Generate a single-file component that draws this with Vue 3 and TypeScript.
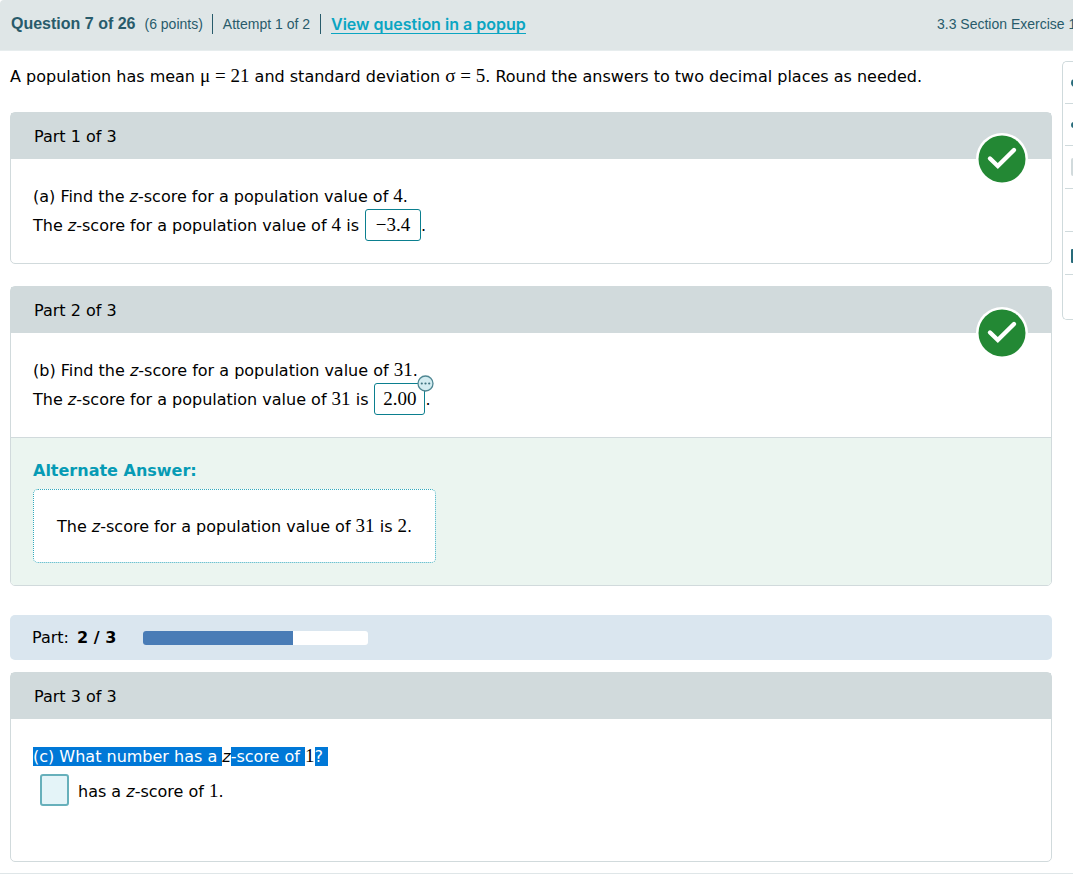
<script setup lang="ts">
import { ref } from 'vue'

const firstAnswer = ref('−3.4')
const secondAnswer = ref('2.00')
const thirdAnswer = ref('')
const progress = 66.6
const tools = ['round', 'dot', 'sheet', 'blank', 'book', 'blank']
</script>

<template>
  <div class="page">
    <header class="topbar">
      <h1 class="title">Question 7 of 26</h1>
      <span class="points">(6 points)</span>
      <span class="attempt">Attempt 1 of 2</span>
      <a class="popup" href="#popup">View question in a popup</a>
      <span class="section">3.3 Section Exercise 17</span>
    </header>

    <div class="content">
      <main class="main">
        <p class="prompt">
          A population has mean <span class="math">μ = 21</span> and standard deviation
          <span class="math">σ = 5</span>. Round the answers to two decimal places as needed.
        </p>

        <section class="card">
          <h2 class="card-head">Part 1 of 3</h2>
          <svg class="check" viewBox="0 0 52 52" role="img" aria-label="Correct">
            <circle cx="26" cy="26" r="26" fill="#fff" />
            <circle cx="26" cy="26" r="23.5" fill="#238834" />
            <path d="M14 25.5 21.8 33 38 17" fill="none" stroke="#fff" stroke-width="4.4" stroke-linecap="round" />
          </svg>
          <div class="card-body">
            <p>(a) Find the <i>z</i>-score for a population value of <span class="math">4</span>.</p>
            <p class="answer-line">
              <label for="answer-a">The <i>z</i>-score for a population value of <span class="math">4</span> is</label>
              <input id="answer-a" v-model="firstAnswer" class="answer wide" readonly />.
            </p>
          </div>
        </section>

        <section class="card second">
          <h2 class="card-head">Part 2 of 3</h2>
          <svg class="check" viewBox="0 0 52 52" role="img" aria-label="Correct">
            <circle cx="26" cy="26" r="26" fill="#fff" />
            <circle cx="26" cy="26" r="23.5" fill="#238834" />
            <path d="M14 25.5 21.8 33 38 17" fill="none" stroke="#fff" stroke-width="4.4" stroke-linecap="round" />
          </svg>
          <div class="card-body">
            <p>(b) Find the <i>z</i>-score for a population value of <span class="math">31</span>.</p>
            <p class="answer-line">
              <label for="answer-b">The <i>z</i>-score for a population value of <span class="math">31</span> is</label>
              <span class="answer-wrap">
                <input id="answer-b" v-model="secondAnswer" class="answer" readonly />
                <button class="more" type="button" aria-label="More answers">
                  <svg viewBox="0 0 17 17">
                    <circle cx="8.5" cy="8.5" r="7.5" fill="#d3ecf1" stroke="#4f8793" stroke-width="1.3" />
                    <g fill="#3f7380">
                      <circle cx="4.8" cy="8.5" r="1.1" />
                      <circle cx="8.5" cy="8.5" r="1.1" />
                      <circle cx="12.2" cy="8.5" r="1.1" />
                    </g>
                  </svg>
                </button>
              </span>.
            </p>
          </div>
          <div class="alternate">
            <h3>Alternate Answer:</h3>
            <div class="alternate-box">
              The <i>z</i>-score for a population value of <span class="math">31</span> is <span class="math">2</span>.
            </div>
          </div>
        </section>

        <div class="progress-row">
          <span>Part: <b>2 / 3</b></span>
          <div class="track"><div class="fill" :style="{ width: progress + '%' }"></div></div>
        </div>

        <section class="card">
          <h2 class="card-head">Part 3 of 3</h2>
          <div class="card-body last">
            <p><span class="marked">(c) What number has a </span><i>z</i><span class="marked">-score of </span><span class="math">1</span><span class="marked">?&nbsp;</span></p>
            <p class="answer-line">
              <input id="answer-c" v-model="thirdAnswer" class="answer empty" />
              <label for="answer-c">has a <i>z</i>-score of <span class="math">1</span>.</label>
            </p>
          </div>
        </section>
      </main>

      <aside class="tools">
        <button v-for="(tool, i) in tools" :key="i" type="button" class="tool" :aria-label="'Tool ' + (i + 1)">
          <span :class="['glyph', tool]"></span>
        </button>
      </aside>
    </div>
  </div>
</template>

<style>
body {
  margin: 0;
  background: #fff;
}
</style>

<style scoped>
.page {
  overflow: hidden;
  border-bottom: 1px solid #dfe6e8;
  color: #000;
  font-family: "DejaVu Sans", Verdana, sans-serif;
  font-size: 16px;
  line-height: 29px;
}
h1, h2, h3, p {
  margin: 0;
  font-size: 16px;
  font-weight: 400;
}
.topbar {
  display: flex;
  align-items: center;
  height: 48px;
  padding: 0 0 2px 11px;
  border-bottom: 1px solid #e7edee;
  border-top-left-radius: 4px;
  background: #dfe6e7;
  color: #285b6b;
  font-family: "Liberation Sans", Arial, sans-serif;
  font-size: 14px;
  line-height: 20px;
  white-space: nowrap;
}
.title {
  font-weight: 700;
}
.points {
  margin-left: 9px;
}
.attempt {
  margin-left: 9px;
  padding: 0 10px;
  border: solid #285b6b;
  border-width: 0 1px;
}
.popup {
  margin: 2px 0 0 10px;
  border-bottom: 1px solid #0aa5c2;
  color: #0aa5c2;
  font-family: Inter, sans-serif;
  font-size: 16px;
  font-weight: 600;
  line-height: 17px;
  text-decoration: none;
}
.section {
  width: 136px;
  margin-left: auto;
}
.content {
  display: flex;
  align-items: flex-start;
  gap: 10px;
  padding: 10px 0 11px 10px;
}
.main {
  flex: 1;
  min-width: 0;
}
.prompt {
  padding-top: 1px;
  margin-bottom: 21px;
}
.math {
  font-family: "Liberation Serif", "Times New Roman", serif;
  font-size: 19px;
  line-height: 20px;
}
.card {
  position: relative;
  border: 1px solid #d1dadc;
  border-radius: 5px;
}
.second {
  margin: 22px 0 29px;
}
.card-head {
  padding: 9px 23px 8px;
  background: #d1dadc;
}
.check {
  position: absolute;
  top: 20px;
  right: 23px;
  width: 52px;
  height: 52px;
}
.card-body {
  padding: 23px 22px;
}
.answer-line {
  display: flex;
  align-items: center;
  height: 29px;
}
.answer {
  box-sizing: border-box;
  width: 51px;
  height: 32px;
  margin: 0 0 2px;
  padding: 0;
  border: 1px solid #0b7f8f;
  border-radius: 3px;
  background: #fff;
  color: #000;
  font-family: "Liberation Serif", "Times New Roman", serif;
  font-size: 19px;
  text-align: center;
}
.answer-line label + .answer,
.answer-wrap {
  margin-left: 6px;
}
.wide {
  width: 56px;
}
.answer-wrap {
  position: relative;
  display: flex;
}
.more {
  position: absolute;
  top: -8px;
  right: -9px;
  width: 17px;
  height: 17px;
  padding: 0;
  border: 0;
  background: none;
}
.more svg {
  display: block;
}
.alternate {
  padding: 18px 22px 22px;
  border-top: 1px solid #d1dadc;
  border-radius: 0 0 4px 4px;
  background: #ebf5f0;
}
.alternate h3 {
  margin-bottom: 4px;
  color: #069bb5;
  font-weight: 700;
}
.alternate-box {
  width: fit-content;
  padding: 22px 23px 21px;
  border: 1px dotted #30a9bc;
  border-radius: 5px;
  background: #fff;
}
.progress-row {
  display: flex;
  align-items: center;
  gap: 27px;
  margin-bottom: 12px;
  padding: 8px 22px;
  border-radius: 5px;
  background: #dae6ef;
}
.progress-row b {
  margin-left: 3px;
}
.track {
  width: 225px;
  height: 14px;
  overflow: hidden;
  border-radius: 3px;
  background: #fff;
}
.fill {
  height: 100%;
  background: #497cb6;
}
.last {
  padding-bottom: 55px;
}
.last .answer-line {
  margin-top: 6px;
}
.marked {
  background: #0078d7;
  color: #fff;
}
.empty {
  width: 29px;
  margin: 0 9px 3px 7px;
  border: 2px solid #67b0bb;
  background: #e4f4f8;
}
.tools {
  width: 11px;
  box-sizing: border-box;
  overflow: hidden;
  border: 1px solid #cfdadc;
  border-right: 0;
  border-radius: 5px 0 0 5px;
  padding-left: 2px;
}
.tool {
  display: flex;
  align-items: center;
  width: 43px;
  height: 43px;
  padding: 0 0 0 6px;
  border: 0;
  border-top: 1px solid #cfdadc;
  background: #fff;
}
.tool:first-child {
  border-top: 0;
  height: 41px;
}
.tool:nth-child(2) {
  height: 42px;
}
.tool:last-child {
  height: 45px;
}
.glyph {
  flex: none;
  width: 16px;
  background: #286b7a;
}
.round {
  height: 8px;
  border-radius: 4px;
}
.dot {
  height: 6px;
  border-radius: 3px;
}
.sheet {
  height: 18px;
  border-radius: 2px;
  background: #d1dadc;
}
.book {
  height: 14px;
  margin-top: 6px;
  border-radius: 1px;
}
.blank {
  background: none;
}
</style>
